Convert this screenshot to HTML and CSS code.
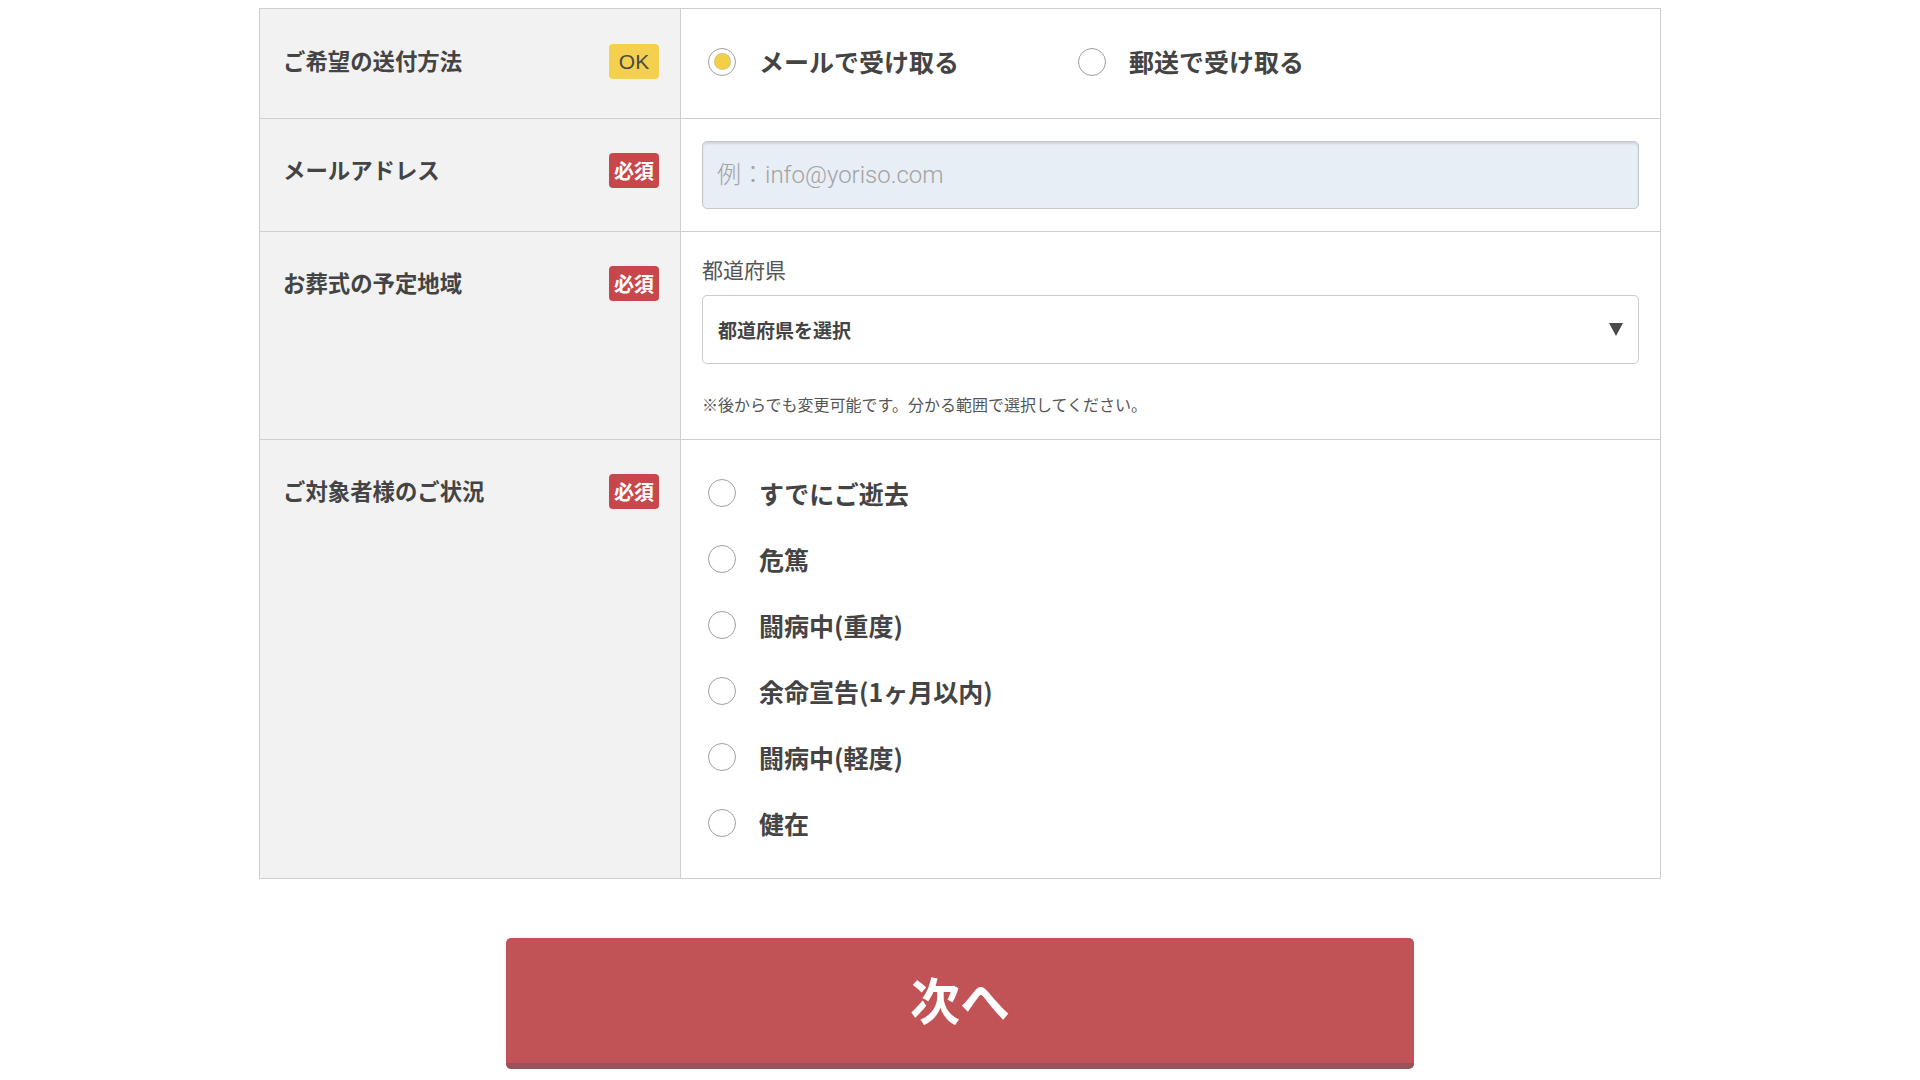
FILE: index.html
```html
<!DOCTYPE html>
<html lang="ja">
<head>
<meta charset="utf-8">
<title>フォーム</title>
<link rel="stylesheet" href="styles.css">
</head>
<body>
<main class="page">
  <div class="form-table">
    <div class="row row-send">
      <div class="label-cell">
        <span class="label-text">ご希望の送付方法</span>
        <span class="badge badge-ok">OK</span>
      </div>
      <div class="field-cell field-center">
        <div class="option-line">
          <label class="option option-wide"><input type="radio" name="send" class="radio" checked><span class="option-text">メールで受け取る</span></label>
          <label class="option option-wide"><input type="radio" name="send" class="radio"><span class="option-text">郵送で受け取る</span></label>
        </div>
      </div>
    </div>
    <div class="row row-mail">
      <div class="label-cell">
        <span class="label-text">メールアドレス</span>
        <span class="badge badge-req">必須</span>
      </div>
      <div class="field-cell">
        <input type="text" class="text-input" placeholder="例：info@yoriso.com">
      </div>
    </div>
    <div class="row row-area">
      <div class="label-cell">
        <span class="label-text">お葬式の予定地域</span>
        <span class="badge badge-req">必須</span>
      </div>
      <div class="field-cell">
        <div class="sub-label">都道府県</div>
        <div class="select-box">
          <span class="select-text">都道府県を選択</span>
          <span class="select-arrow"></span>
        </div>
        <p class="note">※後からでも変更可能です。分かる範囲で選択してください。</p>
      </div>
    </div>
    <div class="row row-status">
      <div class="label-cell">
        <span class="label-text">ご対象者様のご状況</span>
        <span class="badge badge-req">必須</span>
      </div>
      <div class="field-cell field-list">
        <label class="option option-item"><input type="radio" name="status" class="radio"><span class="option-text">すでにご逝去</span></label>
        <label class="option option-item"><input type="radio" name="status" class="radio"><span class="option-text">危篤</span></label>
        <label class="option option-item"><input type="radio" name="status" class="radio"><span class="option-text">闘病中(重度)</span></label>
        <label class="option option-item"><input type="radio" name="status" class="radio"><span class="option-text">余命宣告(1ヶ月以内)</span></label>
        <label class="option option-item"><input type="radio" name="status" class="radio"><span class="option-text">闘病中(軽度)</span></label>
        <label class="option option-item"><input type="radio" name="status" class="radio"><span class="option-text">健在</span></label>
      </div>
    </div>
  </div>
  <div class="actions">
    <button type="button" class="next-button">次へ</button>
  </div>
</main>
</body>
</html>
```

FILE: styles.css
```css
* {
  box-sizing: border-box;
}

html, body {
  margin: 0;
  padding: 0;
  background: #ffffff;
}

body {
  font-family: "Noto Sans CJK JP", "Noto Sans", sans-serif;
  color: #444444;
}

.page {
  width: 1402px;
  margin: 8px auto 0;
}

.form-table {
  border: 1px solid #cfcfcf;
  border-bottom: none;
}

.row {
  display: grid;
  grid-template-columns: 421px 1fr;
  border-bottom: 1px solid #cfcfcf;
}

.label-cell {
  background: #f2f2f2;
  border-right: 1px solid #cfcfcf;
  display: flex;
  justify-content: space-between;
  align-items: flex-start;
  padding: 34px 21px 0 23px;
}

.row-send .label-cell {
  padding-top: 35px;
}

.label-text {
  font-size: 22.4px;
  font-weight: 700;
  line-height: 33px;
  color: #444444;
}

.badge {
  width: 50px;
  height: 35px;
  border-radius: 4px;
  display: flex;
  align-items: center;
  justify-content: center;
  font-size: 20px;
  line-height: 1;
}

.badge-ok {
  background: #f4d04e;
  color: #4a4a4a;
  font-family: "Liberation Sans", "Noto Sans", sans-serif;
  font-size: 21px;
}

.badge-req {
  background: #c8474b;
  color: #ffffff;
  font-weight: 700;
}

.field-cell {
  padding: 22px 21px 22px 21px;
  background: #ffffff;
}

.row-send .field-cell {
  height: 109px;
  display: flex;
  align-items: center;
  padding: 0 21px 4px 27px;
}

.option-line {
  display: flex;
}

.option {
  display: flex;
  align-items: center;
  cursor: pointer;
}

.option-wide {
  width: 370px;
}

.radio {
  appearance: none;
  -webkit-appearance: none;
  margin: 0 23px 0 0;
  width: 28px;
  height: 28px;
  border: 1.5px solid #a0a0a0;
  border-radius: 50%;
  background: #ffffff;
  display: grid;
  place-items: center;
  flex: none;
}

.radio:checked::after {
  content: "";
  width: 15px;
  height: 15px;
  border-radius: 50%;
  background: #f4cf45;
  box-shadow: 0 0 0 1px #d9c27a;
}

.option-text {
  font-size: 25px;
  font-weight: 700;
  color: #444444;
  line-height: 1.3;
}

.text-input {
  display: block;
  width: 100%;
  height: 68px;
  border: 1px solid #c4c8cd;
  border-radius: 5px;
  background: #e7eef6;
  box-shadow: inset 0 2px 2px rgba(0, 0, 0, 0.1);
  padding: 0 14px;
  font-family: "Roboto", "Noto Sans CJK JP", sans-serif;
  font-size: 24px;
  color: #444444;
  outline: none;
}

.text-input::placeholder {
  color: #a3a3a3;
  font-weight: 300;
}

.sub-label {
  font-size: 21px;
  line-height: 31px;
  color: #555555;
  margin: 0 0 10px;
}

.select-box {
  height: 69px;
  border: 1px solid #cccccc;
  border-radius: 5px;
  background: #ffffff;
  display: flex;
  align-items: center;
  justify-content: space-between;
  padding: 0 15px 0 15px;
}

.select-text {
  font-size: 19px;
  font-weight: 700;
  color: #444444;
}

.select-arrow {
  width: 0;
  height: 0;
  border-left: 7.5px solid transparent;
  border-right: 7.5px solid transparent;
  border-top: 13px solid #4a4a4a;
}

.note {
  margin: 28px 0 0;
  font-size: 16px;
  line-height: 24px;
  color: #555555;
}

.row-area .field-cell {
  padding-bottom: 23px;
}

.field-list {
  padding: 20px 21px 22px 27px;
  display: flex;
  flex-direction: column;
}

.option-item {
  height: 66px;
}

.actions {
  display: flex;
  justify-content: center;
  padding-top: 59px;
}

.next-button {
  width: 908px;
  height: 131px;
  border: none;
  border-bottom: 6px solid #9a5259;
  border-radius: 5px;
  background: #c15256;
  color: #ffffff;
  font-family: "Noto Sans CJK JP", sans-serif;
  font-size: 50px;
  font-weight: 700;
  line-height: 1;
  padding: 0 0 6px;
  cursor: pointer;
}
```
